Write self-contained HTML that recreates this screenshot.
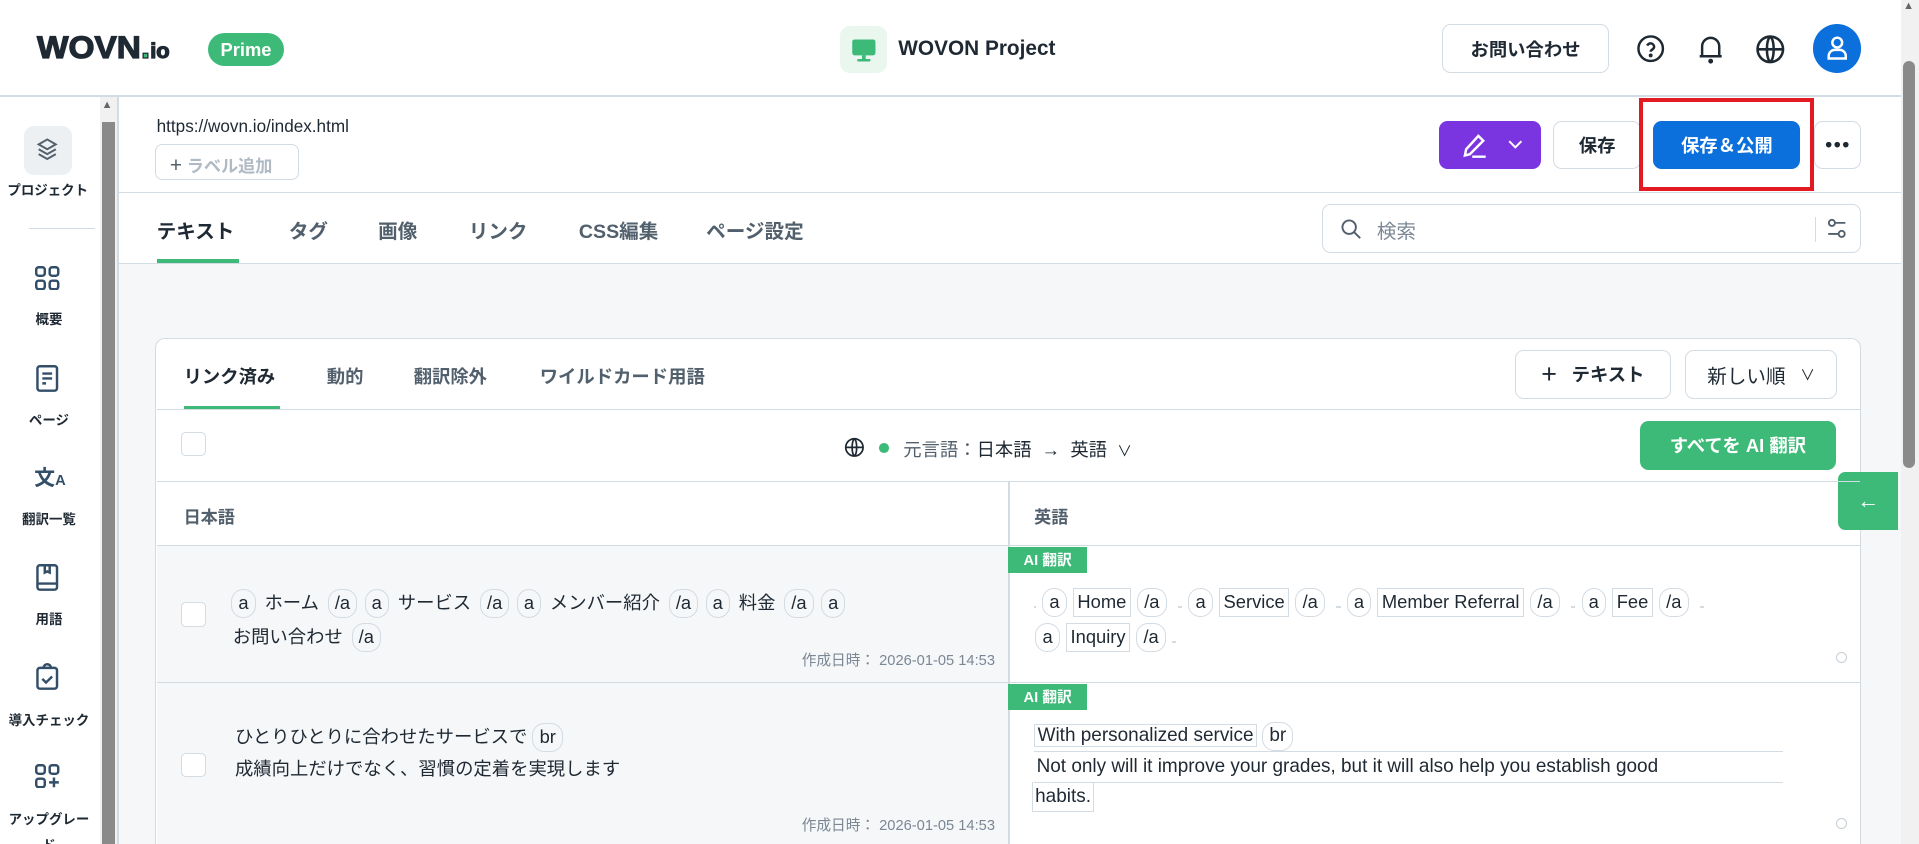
<!DOCTYPE html>
<html><head><meta charset="utf-8">
<style>
html{zoom:1.22385;overflow:hidden}
*{box-sizing:border-box;margin:0;padding:0}
body{width:1568px;height:690px;overflow:hidden;background:#fff;font-family:"Liberation Sans","Noto Sans CJK JP",sans-serif;color:#1f2933}
#w{position:relative;width:1568px;height:690px;overflow:hidden}
.a{position:absolute}
.btn{position:absolute;border:1px solid #d3dbe3;border-radius:7px;background:#fff;display:flex;align-items:center;justify-content:center;font-weight:bold;font-size:15px;color:#1f2933}
.side{position:absolute;left:0;width:80px;text-align:center;font-size:11px;font-weight:bold;color:#1f2933}
.tab{position:absolute;top:176px;font-size:16px;color:#52606d;font-weight:bold}
.ctab{position:absolute;top:297px;font-size:15px;color:#52606d;font-weight:bold}
.chip{display:inline-block;border:1px solid #d3dbe3;border-radius:10px;padding:0 5px;line-height:22px;margin:0 3px}
.box{display:inline-block;border:1px solid #d3dbe3;padding:0 3px;line-height:22px;margin:0 2px}
.small{font-size:12px;color:#7b8794}
</style></head><body><div id="w">
<!-- header -->
<div class="a" style="left:30px;top:24px;font-size:26px;font-weight:bold;color:#1f2933;-webkit-text-stroke:1px #1f2933;transform:scaleX(1.05);transform-origin:left">WOVN<span style="color:#3dba78">.</span><span style="font-size:17px">io</span></div>
<div class="a" style="left:170px;top:27px;width:62px;height:27px;border-radius:14px;background:#3dba78;color:#fff;font-weight:bold;font-size:15px;display:flex;align-items:center;justify-content:center">Prime</div>
<div class="a" style="left:686px;top:21px;width:39px;height:39px;border-radius:8px;background:#e9f7ef"></div>
<svg class="a" style="left:695px;top:30px" width="21" height="21" viewBox="0 0 21 21"><rect x="1" y="2" width="19" height="13" rx="2" fill="#3dba78"/><rect x="9" y="15" width="3" height="3" fill="#3dba78"/><rect x="5" y="18" width="11" height="2" rx="1" fill="#3dba78"/></svg>
<div class="a" style="left:734px;top:30px;font-size:17px;font-weight:bold;color:#1f2933">WOVON Project</div>
<div class="btn" style="left:1178px;top:20px;width:137px;height:40px">お問い合わせ</div>
<svg class="a" style="left:1337px;top:28px" width="24" height="24" viewBox="0 0 24 24" fill="none" stroke="#1f2933" stroke-width="2"><circle cx="12" cy="12" r="10"/><path d="M9.2 9.5a2.9 2.9 0 0 1 5.6 1c0 2-2.8 2.3-2.8 4"/><circle cx="12" cy="17.5" r=".6" fill="#1f2933"/></svg>
<svg class="a" style="left:1386px;top:27px" width="24" height="26" viewBox="0 0 24 26" fill="none" stroke="#1f2933" stroke-width="2"><path d="M5 19V11a7 7 0 0 1 14 0v8H3h18"/><circle cx="12" cy="23" r="1" fill="#1f2933"/></svg>
<svg class="a" style="left:1434px;top:28px" width="25" height="25" viewBox="0 0 24 24" fill="none" stroke="#1f2933" stroke-width="2"><circle cx="12" cy="12" r="10"/><path d="M2 12h20M12 2c-3.5 3-3.5 17 0 20M12 2c3.5 3 3.5 17 0 20"/></svg>
<div class="a" style="left:1481px;top:20px;width:40px;height:40px;border-radius:50%;background:#0b6fdc"></div>
<svg class="a" style="left:1491px;top:28px" width="20" height="24" viewBox="0 0 20 24" fill="none" stroke="#fff" stroke-width="2"><circle cx="10" cy="7" r="4"/><path d="M3 20v-2a5 5 0 0 1 5-5h4a5 5 0 0 1 5 5v2z"/></svg>
<div class="a" style="left:0;top:78px;width:1553px;height:1px;background:#d3dbe3"></div>
<div class="a" style="left:97px;top:215px;width:1456px;height:600px;background:#f5f7f9;border-top:1px solid #d3dbe3"></div>
<div class="a" style="left:127px;top:276px;width:1394px;height:540px;background:#fff;border:1px solid #d3dbe3;border-radius:8px"></div>
<div class="a" style="left:1553px;top:0;width:15px;height:800px;background:#f1f1f1"></div>
<div class="a" style="left:1555px;top:0;font-size:9px;color:#666">▲</div>
<div class="a" style="left:1555px;top:50px;width:10px;height:332px;border-radius:5px;background:#8a8a8a"></div>
<div class="a" style="left:82px;top:79px;width:14px;height:720px;background:#f1f1f1"></div>
<div class="a" style="left:83px;top:81px;font-size:9px;color:#666">▲</div>
<div class="a" style="left:83px;top:100px;width:11px;height:700px;background:#8a8a8a"></div>
<div class="a" style="left:96px;top:79px;width:1px;height:720px;background:#d3dbe3"></div>
<div class="a" style="left:20px;top:103px;width:39px;height:40px;border-radius:8px;background:#edf0f3"></div>
<svg class="a" style="left:29px;top:112px" width="20" height="22" viewBox="0 0 20 22" fill="none" stroke="#52606d" stroke-width="1.6"><path d="M10 2l7 4-7 4-7-4z"/><path d="M3 10l7 4 7-4M3 14l7 4 7-4"/></svg>
<div class="side" style="top:146px;left:-1px">プロジェクト</div>
<div class="a" style="left:24px;top:186px;width:54px;height:1px;background:#d3dbe3"></div>
<svg class="a" style="left:29px;top:217px" width="20" height="20" viewBox="0 0 20 20" fill="none" stroke="#334e68" stroke-width="2"><rect x="1" y="1" width="7" height="7" rx="2"/><rect x="12" y="1" width="7" height="7" rx="2"/><rect x="1" y="12" width="7" height="7" rx="2"/><rect x="12" y="12" width="7" height="7" rx="2"/></svg>
<div class="side" style="top:252px">概要</div>
<svg class="a" style="left:29px;top:298px" width="20" height="22" viewBox="0 0 20 22" fill="none" stroke="#334e68" stroke-width="2"><rect x="2" y="1" width="16" height="20" rx="2"/><path d="M6 7h8M6 11h8M6 15h3"/></svg>
<div class="side" style="top:334px">ページ</div>
<div class="a" style="left:28px;top:377px;font-size:17px;font-weight:bold;color:#334e68">文<span style="font-size:12px">A</span></div>
<div class="side" style="top:415px">翻訳一覧</div>
<svg class="a" style="left:29px;top:461px" width="20" height="22" viewBox="0 0 20 22" fill="none" stroke="#334e68" stroke-width="2"><rect x="2" y="1" width="16" height="20" rx="2"/><path d="M8 1v6l2-1 2 1V1M2 16h16"/></svg>
<div class="side" style="top:497px">用語</div>
<svg class="a" style="left:29px;top:542px" width="20" height="22" viewBox="0 0 20 22" fill="none" stroke="#334e68" stroke-width="2"><rect x="2" y="4" width="16" height="17" rx="2"/><path d="M7 4a3 3 0 0 1 6 0M6 13l3 3 5-5"/></svg>
<div class="side" style="top:579px">導入チェック</div>
<svg class="a" style="left:29px;top:624px" width="20" height="20" viewBox="0 0 20 20" fill="none" stroke="#334e68" stroke-width="2"><rect x="1" y="1" width="7" height="7" rx="2"/><rect x="12" y="1" width="7" height="7" rx="2"/><rect x="1" y="12" width="7" height="7" rx="2"/><path d="M15.5 11v8M11.5 15h8"/></svg>
<div class="side" style="top:659px;line-height:22px">アップグレー<br>ド</div>
<div class="a" style="left:128px;top:95px;font-size:14px;color:#1f2933">https://wovn.io/index.html</div>
<div class="a" style="left:127px;top:118px;width:117px;height:29px;border:1px solid #d3dbe3;border-radius:6px;font-size:14px;color:#b0bac4;font-weight:bold;padding:5px 0 0 11px"><span style="color:#52606d;font-weight:normal;font-size:17px">+</span> ラベル追加</div>
<div class="a" style="left:1176px;top:99px;width:83px;height:39px;border-radius:7px;background:#7b35e0"></div>
<svg class="a" style="left:1193px;top:107px" width="24" height="24" viewBox="0 0 24 24" fill="none" stroke="#fff" stroke-width="2"><path d="M4 20l1-5L15 4l4 4L8 19zM10 21h11"/></svg>
<svg class="a" style="left:1232px;top:114px" width="12" height="8" viewBox="0 0 12 8" fill="none" stroke="#fff" stroke-width="1.6"><path d="M1 1l5 5 5-5"/></svg>
<div class="btn" style="left:1269px;top:99px;width:72px;height:39px">保存</div>
<div class="a" style="left:1339px;top:80px;width:143px;height:76px;border:4px solid #e21b23"></div>
<div class="a" style="left:1351px;top:99px;width:120px;height:39px;border-radius:7px;background:#0b6fdc;color:#fff;font-weight:bold;font-size:15px;display:flex;align-items:center;justify-content:center">保存＆公開</div>
<div class="btn" style="left:1482px;top:99px;width:39px;height:39px"><svg width="20" height="6" viewBox="0 0 20 6"><circle cx="3" cy="3" r="2.3" fill="#1f2933"/><circle cx="10" cy="3" r="2.3" fill="#1f2933"/><circle cx="17" cy="3" r="2.3" fill="#1f2933"/></svg></div>
<div class="a" style="left:97px;top:157px;width:1456px;height:1px;background:#d3dbe3"></div>
<div class="tab" style="left:128px;color:#1f2933">テキスト</div>
<div class="a" style="left:128px;top:212px;width:67px;height:3px;background:#3dba78"></div>
<div class="tab" style="left:236px">タグ</div>
<div class="tab" style="left:309px">画像</div>
<div class="tab" style="left:383px">リンク</div>
<div class="tab" style="left:473px">CSS編集</div>
<div class="tab" style="left:577px">ページ設定</div>
<div class="a" style="left:1080px;top:167px;width:441px;height:40px;border:1px solid #d3dbe3;border-radius:7px"></div>
<svg class="a" style="left:1095px;top:178px" width="18" height="18" viewBox="0 0 18 18" fill="none" stroke="#52606d" stroke-width="1.6"><circle cx="7.5" cy="7.5" r="5.5"/><path d="M11.5 11.5l5 5"/></svg>
<div class="a" style="left:1125px;top:176px;font-size:16px;color:#7b8794">検索</div>
<div class="a" style="left:1483px;top:177px;width:1px;height:21px;background:#d3dbe3"></div>
<svg class="a" style="left:1493px;top:178px" width="16" height="18" viewBox="0 0 16 18" fill="none" stroke="#52606d" stroke-width="1.5"><circle cx="4" cy="4" r="2.5"/><path d="M7 4h8M1 13h8"/><circle cx="12" cy="13" r="2.5"/></svg>
<div class="ctab" style="left:150px;color:#1f2933">リンク済み</div>
<div class="a" style="left:150px;top:332px;width:79px;height:3px;background:#3dba78"></div>
<div class="ctab" style="left:267px">動的</div>
<div class="ctab" style="left:338px">翻訳除外</div>
<div class="ctab" style="left:441px">ワイルドカード用語</div>
<div class="btn" style="left:1238px;top:286px;width:127px;height:40px"><span style="font-size:22px;font-weight:normal;margin-right:12px">+</span>テキスト</div>
<div class="btn" style="left:1377px;top:286px;width:124px;height:40px;font-weight:normal;font-size:16px">新しい順 <span style="font-size:12px;margin-left:12px">∨</span></div>
<div class="a" style="left:128px;top:334px;width:1392px;height:1px;background:#d3dbe3"></div>
<div class="a" style="left:148px;top:353px;width:20px;height:20px;border:1px solid #d3dbe3;border-radius:4px"></div>
<svg class="a" style="left:690px;top:357px" width="17" height="17" viewBox="0 0 24 24" fill="none" stroke="#1f2933" stroke-width="2"><circle cx="12" cy="12" r="10"/><path d="M2 12h20M12 2c-3.5 3-3.5 17 0 20M12 2c3.5 3 3.5 17 0 20"/></svg>
<div class="a" style="left:718px;top:362px;width:8px;height:8px;border-radius:50%;background:#3dba78"></div>
<div class="a" style="left:738px;top:356px;font-size:15px;color:#1f2933"><span style="color:#52606d">元言語：</span>日本語 &nbsp;→&nbsp; 英語 &nbsp;<span style="font-size:12px">∨</span></div>
<div class="a" style="left:1340px;top:344px;width:160px;height:40px;border-radius:7px;background:#3dba78;color:#fff;font-weight:bold;font-size:15px;display:flex;align-items:center;justify-content:center">すべてを AI 翻訳</div>
<div class="a" style="left:1502px;top:386px;width:49px;height:47px;border-radius:6px 0 0 6px;background:#3dba78;color:#fff;font-size:18px;display:flex;align-items:center;justify-content:center">←</div>
<div class="a" style="left:128px;top:393px;width:1392px;height:1px;background:#d3dbe3"></div>
<div class="a" style="left:150px;top:411px;font-size:14px;color:#52606d;font-weight:bold">日本語</div>
<div class="a" style="left:845px;top:411px;font-size:14px;color:#52606d;font-weight:bold">英語</div>
<div class="a" style="left:824px;top:393px;width:1px;height:420px;background:#d3dbe3"></div>
<div class="a" style="left:128px;top:445px;width:1392px;height:1px;background:#d3dbe3"></div>
<div class="a" style="left:128px;top:446px;width:696px;height:111px;background:#f5f7f9"></div>
<div class="a" style="left:148px;top:492px;width:20px;height:20px;border:1px solid #d3dbe3;border-radius:4px;background:#fff"></div>
<div class="a" style="left:186px;top:479px;width:620px;font-size:15px;line-height:28px;color:#1f2933"><span class="chip">a</span> ホーム <span class="chip">/a</span><span class="chip">a</span> サービス <span class="chip">/a</span><span class="chip">a</span> メンバー紹介 <span class="chip">/a</span><span class="chip">a</span> 料金 <span class="chip">/a</span><span class="chip">a</span><br>&nbsp;お問い合わせ <span class="chip">/a</span></div>
<div class="a small" style="right:755px;top:530px">作成日時： 2026-01-05 14:53</div>
<div class="a" style="left:824px;top:447px;width:64px;height:21px;background:#3dba78;color:#fff;font-size:12px;font-weight:bold;display:flex;align-items:center;justify-content:center">AI 翻訳</div>
<div class="a" style="left:843px;top:477px;width:675px;font-size:15px;line-height:29px;color:#1f2933"><span class="box" style="padding:0"></span><span class="chip">a</span><span class="box">Home</span><span class="chip">/a</span> <span class="box" style="padding:0 1px"></span><span class="chip">a</span><span class="box">Service</span><span class="chip">/a</span> <span class="box" style="padding:0 1px"></span><span class="chip">a</span><span class="box">Member Referral</span><span class="chip">/a</span> <span class="box" style="padding:0 1px"></span><span class="chip">a</span><span class="box">Fee</span><span class="chip">/a</span> <span class="box" style="padding:0 1px"></span><br><span class="chip">a</span><span class="box">Inquiry</span><span class="chip">/a</span><span class="box" style="padding:0 1px"></span></div>
<div class="a" style="left:1500px;top:533px;width:9px;height:9px;border:1.5px solid #c5ced6;border-radius:50%"></div>
<div class="a" style="left:128px;top:557px;width:1392px;height:1px;background:#d3dbe3"></div>
<div class="a" style="left:128px;top:558px;width:696px;height:260px;background:#f5f7f9"></div>
<div class="a" style="left:148px;top:615px;width:20px;height:20px;border:1px solid #d3dbe3;border-radius:4px;background:#fff"></div>
<div class="a" style="left:192px;top:589px;font-size:15px;line-height:26px;color:#1f2933">ひとりひとりに合わせたサービスで <span class="chip" style="margin:0">br</span><br>成績向上だけでなく、習慣の定着を実現します</div>
<div class="a small" style="right:755px;top:665px">作成日時： 2026-01-05 14:53</div>
<div class="a" style="left:824px;top:559px;width:64px;height:21px;background:#3dba78;color:#fff;font-size:12px;font-weight:bold;display:flex;align-items:center;justify-content:center">AI 翻訳</div>
<div class="a" style="left:845px;top:589px;font-size:15.5px;line-height:24px;color:#1f2933"><span style="border:1px solid #d3dbe3;padding:0 2px">With personalized service</span> <span class="chip" style="margin:0">br</span></div>
<div class="a" style="left:845px;top:614px;width:612px;font-size:15.5px;line-height:24px;color:#1f2933;border-top:1px solid #d3dbe3;border-bottom:1px solid #d3dbe3;padding-left:2px">Not only will it improve your grades, but it will also help you establish good</div>
<div class="a" style="left:843px;top:639px;font-size:15.5px;line-height:24px;color:#1f2933;border:1px solid #d3dbe3;border-top:none;padding:0 2px">habits.</div>
<div class="a" style="left:1500px;top:668px;width:9px;height:9px;border:1.5px solid #c5ced6;border-radius:50%"></div>
</div></body></html>
